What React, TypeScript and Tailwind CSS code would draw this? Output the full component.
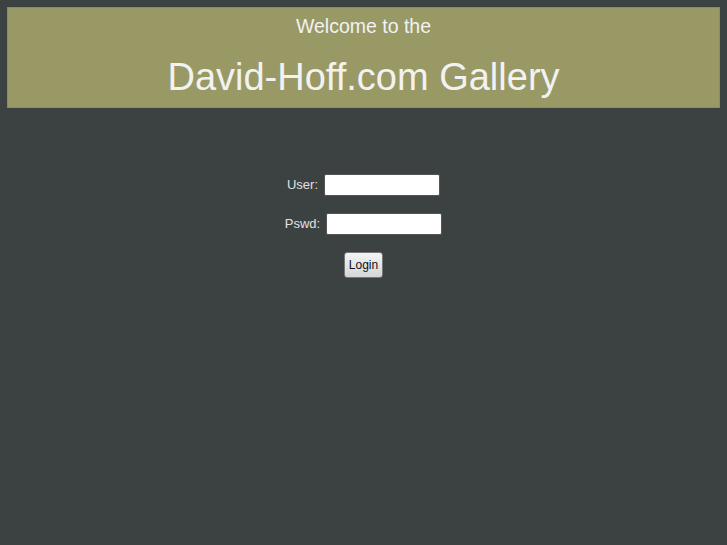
export default function App() {
  return (
    <div className="min-h-[545px] bg-[#3c4242] p-[7px] font-['Liberation_Sans',Arial,sans-serif]">
      <div className="h-[101px] border border-[#8c8c5c] bg-[#999966] text-center text-[#f2f2f2]">
        <div className="pt-[6px] text-[19.5px] leading-[24px]">Welcome to the</div>
        <div className="mt-[18px] text-[38px] leading-[42px]">David-Hoff.com Gallery</div>
      </div>

      <form className="mt-[66px] flex flex-col items-center text-[13px] text-[#e0e0e0]">
        <label className="flex h-[22px] items-center gap-[6px]">
          User:
          <input className="h-[22px] w-[116px] rounded-[2px] border border-[#555] bg-white" />
        </label>
        <label className="mt-[17px] flex h-[22px] items-center gap-[6px]">
          Pswd:
          <input type="password" className="h-[22px] w-[116px] rounded-[2px] border border-[#555] bg-white" />
        </label>
        <button
          type="button"
          className="mt-[17px] h-[26px] w-[39px] rounded-[3px] border border-[#777] bg-gradient-to-b from-[#f4f4f4] to-[#d6d6d6] text-[12px] text-[#111]"
        >
          Login
        </button>
      </form>
    </div>
  )
}
